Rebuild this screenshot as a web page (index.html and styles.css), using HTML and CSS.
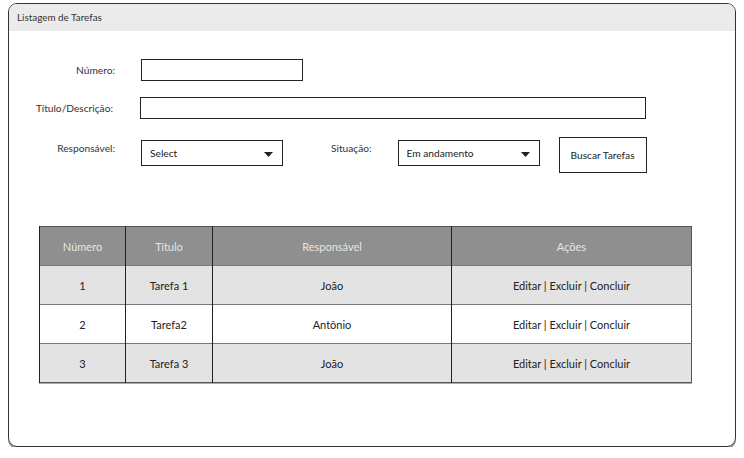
FILE: index.html
```html
<!DOCTYPE html>
<html lang="pt-BR">
<head>
<meta charset="utf-8">
<title>Listagem de Tarefas</title>
<link rel="stylesheet" href="styles.css">
</head>
<body>
<div class="window">
  <div class="titlebar">Listagem de Tarefas</div>
  <div class="form">
    <div class="row row-num">
      <label class="lbl">Número:</label>
      <div class="input input-num"></div>
    </div>
    <div class="row row-title">
      <label class="lbl lbl-title">Título/Descrição:</label>
      <div class="input input-title"></div>
    </div>
    <div class="row row-filters">
      <label class="lbl lbl-top">Responsável:</label>
      <div class="select"><span>Select</span><svg class="caret" width="9" height="5" viewBox="0 0 9 5"><path d="M0 0H9L4.5 5Z" fill="#222"/></svg></div>
      <label class="lbl-sit">Situação:</label>
      <div class="select"><span>Em andamento</span><svg class="caret" width="9" height="5" viewBox="0 0 9 5"><path d="M0 0H9L4.5 5Z" fill="#222"/></svg></div>
      <div class="button">Buscar Tarefas</div>
    </div>
  </div>
  <table class="grid">
    <thead>
      <tr><th class="c1">Número</th><th class="c2">Título</th><th class="c3">Responsável</th><th class="c4">Ações</th></tr>
    </thead>
    <tbody>
      <tr class="alt"><td>1</td><td>Tarefa 1</td><td>João</td><td>Editar | Excluir | Concluir</td></tr>
      <tr><td>2</td><td>Tarefa2</td><td>Antônio</td><td>Editar | Excluir | Concluir</td></tr>
      <tr class="alt"><td>3</td><td>Tarefa 3</td><td>João</td><td>Editar | Excluir | Concluir</td></tr>
    </tbody>
  </table>
</div>
</body>
</html>
```
FILE: styles.css
```css
* { box-sizing: border-box; }
html, body { margin: 0; padding: 0; background: #fff; }
body {
  font-family: Lato, "Noto Sans", sans-serif;
  font-size: 11px;
  color: #222;
}
.window {
  margin: 3px 0 0 8px;
  width: 728px;
  height: 444px;
  border: 1px solid #333;
  border-radius: 9px;
  box-shadow: 0 2px 0 #999;
  overflow: hidden;
}
.titlebar {
  height: 27px;
  background: #ebebeb;
  padding: 7px 0 0 8px;
  font-size: 9.9px;
  color: #333;
}
.form {
  padding: 28px 0 0 8px;
  font-size: 10.2px;
}
.row {
  display: flex;
  align-items: center;
}
.row-title { margin-top: 16px; }
.row-filters { margin-top: 18px; align-items: flex-start; }
.lbl {
  width: 98px;
  text-align: right;
  margin-right: 26px;
  color: #333;
}
.lbl-title { padding-right: 2px; margin-right: 25px; }
.lbl-top { margin-top: 5px; }
.input {
  height: 22px;
  border: 1px solid #222;
  background: #fff;
}
.input-num { width: 162px; }
.input-title { width: 506px; }
.select {
  margin-top: 3px;
  width: 142px;
  height: 26px;
  border: 1px solid #222;
  display: flex;
  align-items: center;
  justify-content: space-between;
  padding: 0 9px 0 8px;
  color: #222;
}
.caret { display: block; margin-top: 2px; }
.lbl-sit {
  margin: 5px 26px 0 48px;
  color: #333;
}
.button {
  margin-left: 19px;
  width: 88px;
  height: 36px;
  border: 1px solid #222;
  display: flex;
  align-items: center;
  justify-content: center;
  color: #222;
}
.grid {
  margin: 53px 0 0 30px;
  width: 652px;
  border-collapse: collapse;
  border: 1px solid #555;
  box-shadow: 0 1px 0 #aaa;
  table-layout: fixed;
}
.grid th, .grid td {
  height: 39px;
  text-align: center;
  font-weight: normal;
  padding: 0;
  border-left: 1px solid #222;
}
.grid th {
  background: #8f8f8f;
  color: #e6e6e6;
}
.grid td { border-top: 1px solid #7a7a7a; background: #fff; }
.grid tr.alt td { background: #e3e3e3; }
.c1 { width: 86px; }
.c2 { width: 87px; }
.c3 { width: 239px; }
.c4 { width: 240px; }
```
